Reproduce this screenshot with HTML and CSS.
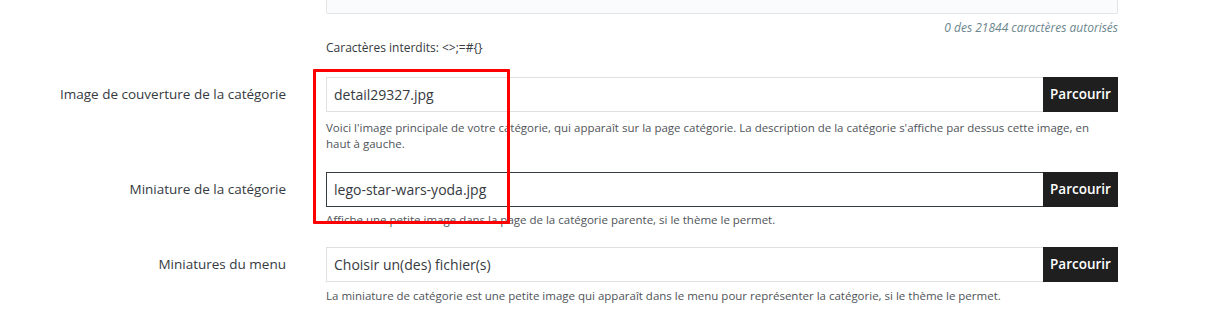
FILE: index.html
```html
<!DOCTYPE html>
<html lang="fr">
<head>
<meta charset="utf-8">
<title>Catégorie</title>
<link rel="stylesheet" href="styles.css">
</head>
<body>
<div class="form">
  <div class="row row-top">
    <div class="label"></div>
    <div class="field">
      <div class="textarea"></div>
      <div class="counter">0 des 21844 caractères autorisés</div>
      <div class="forbidden">Caractères interdits: &lt;&gt;;=#{}</div>
    </div>
  </div>

  <div class="row row-cover">
    <div class="label">Image de couverture de la catégorie</div>
    <div class="field">
      <div class="file">
        <div class="file-name">detail29327.jpg</div>
        <div class="file-btn">Parcourir</div>
      </div>
      <div class="help help-two">Voici l'image principale de votre catégorie, qui apparaît sur la page catégorie. La description de la catégorie s'affiche par dessus cette image, en<br>haut à gauche.</div>
    </div>
  </div>

  <div class="row row-thumb">
    <div class="label">Miniature de la catégorie</div>
    <div class="field">
      <div class="file file-active">
        <div class="file-name">lego-star-wars-yoda.jpg</div>
        <div class="file-btn">Parcourir</div>
      </div>
      <div class="help help-tight">Affiche une petite image dans la page de la catégorie parente, si le thème le permet.</div>
    </div>
  </div>

  <div class="row row-menu">
    <div class="label">Miniatures du menu</div>
    <div class="field">
      <div class="file">
        <div class="file-name">Choisir un(des) fichier(s)</div>
        <div class="file-btn">Parcourir</div>
      </div>
      <div class="help help-menu">La miniature de catégorie est une petite image qui apparaît dans le menu pour représenter la catégorie, si le thème le permet.</div>
    </div>
  </div>
</div>
<div class="highlight"></div>
</body>
</html>
```

FILE: styles.css
```css
html, body {
  margin: 0;
  padding: 0;
  background: #ffffff;
}

body {
  position: relative;
  width: 1218px;
  height: 318px;
  overflow: hidden;
  font-family: "Open Sans", "Noto Sans", sans-serif;
  color: #363a41;
}

.form {
  display: flex;
  flex-direction: column;
}

.row {
  display: grid;
  grid-template-columns: 286px 792px;
  column-gap: 40px;
}

.label {
  text-align: right;
  font-size: 13.5px;
  line-height: 34px;
  color: #363a41;
  white-space: nowrap;
}

.field {
  display: flex;
  flex-direction: column;
}

.textarea {
  height: 13px;
  background: #fafbfc;
  border: 1px solid #e3e5e7;
  border-top: none;
  border-radius: 0 0 2px 2px;
}

.counter {
  margin-top: 6px;
  text-align: right;
  font-size: 12px;
  line-height: 16px;
  font-style: italic;
  color: #6c868e;
}

.forbidden {
  margin-top: 4px;
  font-size: 12px;
  line-height: 16px;
  color: #363a41;
}

.row-cover {
  margin-top: 21px;
}

.row-thumb {
  margin-top: 20px;
}

.row-menu {
  margin-top: 19px;
}

.file {
  display: flex;
  height: 35px;
}

.file-name {
  flex: 1;
  border: 1px solid #e0e0e0;
  border-right: none;
  padding: 0 12px 0 7px;
  font-size: 14px;
  line-height: 33px;
  color: #363a41;
}

.file-active .file-name {
  border-color: #363a41;
}

.file-btn {
  width: 75px;
  background: #1f1f1f;
  color: #ffffff;
  font-size: 13.5px;
  font-weight: 600;
  line-height: 35px;
  text-align: center;
}

.help {
  font-size: 11.5px;
  line-height: 16px;
  color: #4f5459;
}

.help-two {
  margin-top: 8px;
}

.help-tight {
  margin-top: 5px;
}

.help-menu {
  margin-top: 6px;
}

.highlight {
  position: absolute;
  left: 313px;
  top: 69px;
  width: 191px;
  height: 149px;
  border: 3px solid #ff0000;
  border-radius: 1px;
  pointer-events: none;
}
```
